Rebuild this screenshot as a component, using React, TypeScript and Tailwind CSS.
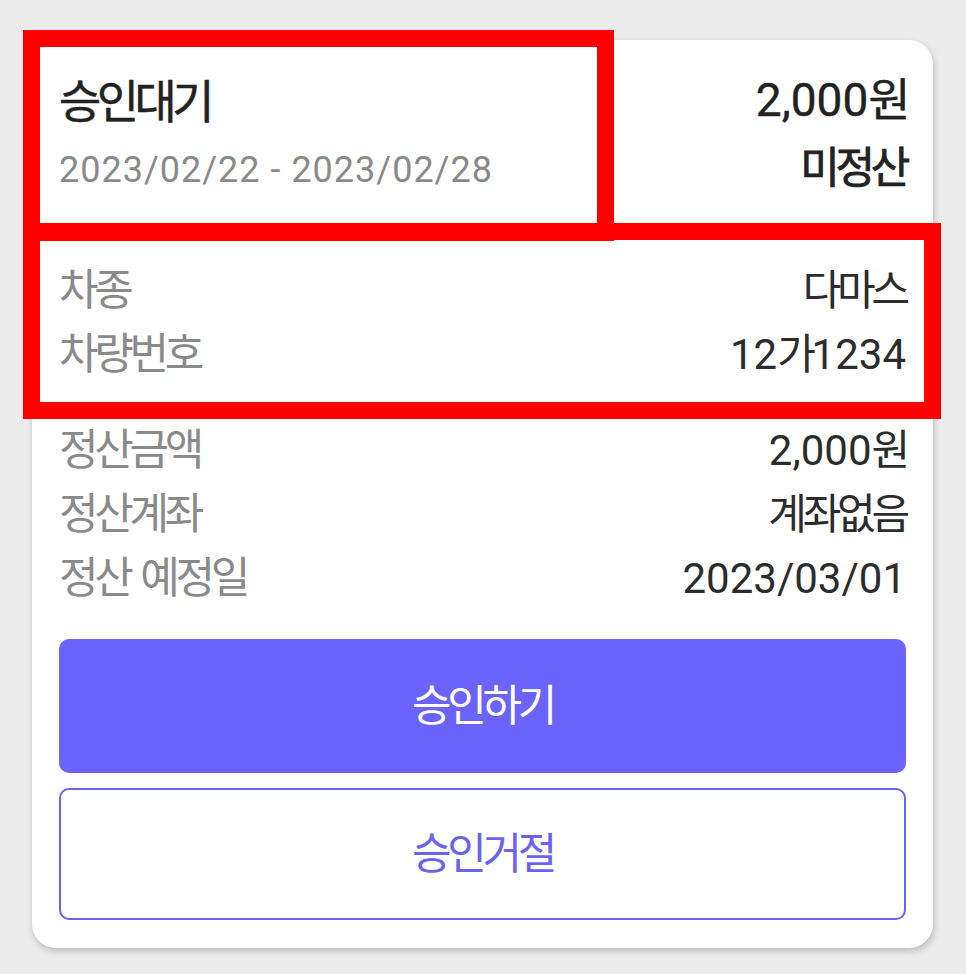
import type { ReactNode } from 'react';

// Hangul glyphs in Noto Sans CJK are full width; the screenshot font packs them tighter
function Txt({ children }: { children: string }) {
  const parts = children.split(/([\uac00-\ud7a3]+)/);
  return (
    <>
      {parts.map((p, i) =>
        /[\uac00-\ud7a3]/.test(p) ? (
          <span key={i} className="tracking-[-0.1em]">
            {p}
          </span>
        ) : (
          <span key={i}>{p}</span>
        )
      )}
    </>
  );
}

function Row({ label, value }: { label: string; value: string }) {
  return (
    <div className="flex h-[64px] items-center justify-between">
      <span className="text-[43px] text-[#8a8a8a]">
        <Txt>{label}</Txt>
      </span>
      <span className="text-[42px] text-[#2c2c2c]">
        <Txt>{value}</Txt>
      </span>
    </div>
  );
}

function Highlight({ className }: { className: string }) {
  return <div className={`pointer-events-none absolute border-[17px] border-[#ff0000] ${className}`}></div>;
}

export default function App(): ReactNode {
  return (
    <div
      className="relative min-h-screen bg-[#ececec] px-[32px] pt-[40px] pb-[26px]"
      style={{ fontFamily: 'Roboto, "Noto Sans CJK KR", sans-serif' }}
    >
      {/* Card */}
      <div className="w-[901px] rounded-[24px] bg-white px-[27px] pt-[28px] pb-[28px] shadow-[1px_3px_7px_rgba(0,0,0,0.22)]">
        {/* Header */}
        <div className="flex justify-between">
          <div className="flex flex-col">
            <div className="flex h-[68px] items-center text-[46px] text-[#222] [-webkit-text-stroke:0.5px_#222]">
              <Txt>승인대기</Txt>
            </div>
            <div className="flex h-[68px] items-center text-[36px] tracking-[1px] text-[#8a8a8a]">
              2023/02/22 - 2023/02/28
            </div>
          </div>
          <div className="flex flex-col items-end">
            <div className="-mt-[2px] flex h-[68px] items-center text-[46px] text-[#222] [-webkit-text-stroke:0.4px_#222]">
              <Txt>2,000원</Txt>
            </div>
            <div className="flex h-[68px] items-center text-[43px] text-[#222] [-webkit-text-stroke:0.8px_#222]">
              <Txt>미정산</Txt>
            </div>
          </div>
        </div>

        {/* Vehicle */}
        <div className="mt-[54px] flex flex-col">
          <Row label="차종" value="다마스" />
          <Row label="차량번호" value="12가1234" />
        </div>

        {/* Settlement */}
        <div className="mt-[32px] flex flex-col">
          <Row label="정산금액" value="2,000원" />
          <Row label="정산계좌" value="계좌없음" />
          <Row label="정산 예정일" value="2023/03/01" />
        </div>

        {/* Actions */}
        <div className="mt-[29px] flex flex-col gap-[15px]">
          <button className="flex h-[134px] items-center justify-center rounded-[10px] bg-[#6a63fe] text-[43px] text-white">
            <Txt>승인하기</Txt>
          </button>
          <button className="flex h-[132px] items-center justify-center rounded-[10px] border-2 border-[#6b63f0] bg-white text-[43px] text-[#6b63f0]">
            <Txt>승인거절</Txt>
          </button>
        </div>
      </div>

      {/* Annotation boxes */}
      <Highlight className="left-[23px] top-[30px] h-[211px] w-[591px]" />
      <Highlight className="left-[23px] top-[223px] h-[196px] w-[918px]" />
    </div>
  );
}
